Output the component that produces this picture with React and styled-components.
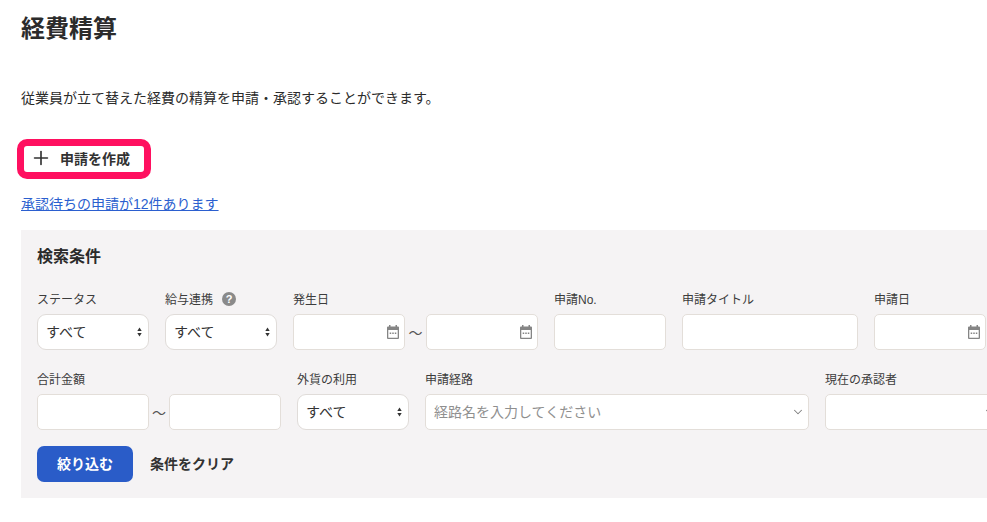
import React from 'react';
import styled, { createGlobalStyle } from 'styled-components';
import { Plus, ChevronDown } from 'lucide-react';

const GlobalStyle = createGlobalStyle`
  html, body {
    margin: 0;
    background: #fff;
    overflow: hidden;
  }
  body {
    font-family: "Liberation Sans", "Noto Sans CJK JP", sans-serif;
    color: #323232;
  }
`;

const Page = styled.div`
  width: 987px;
  height: 522px;
  padding: 13px 0 0 21px;
  box-sizing: border-box;
  overflow: hidden;
`;

const Title = styled.h1`
  margin: 0;
  font-size: 24px;
  line-height: 32px;
  font-weight: 700;
  color: #2b2b2b;
`;

const Description = styled.p`
  margin: 42px 0 0;
  font-size: 14px;
  line-height: 22px;
  color: #2b2b2b;
`;

const CreateButton = styled.button`
  display: flex;
  align-items: center;
  gap: 8px;
  width: 134px;
  height: 40px;
  margin: 30px 0 0 -4px;
  padding: 0 0 2px 6px;
  box-sizing: border-box;
  border: 7px solid #ff1060;
  border-radius: 10px;
  background: #fff;
  font: inherit;
  font-size: 14px;
  font-weight: 700;
  color: #323232;
`;

const PendingLink = styled.a`
  display: block;
  margin-top: 14px;
  font-size: 14px;
  line-height: 22px;
  color: #2b5fcf;
  text-decoration: underline;
`;

const SearchPanel = styled.section`
  width: 1100px;
  height: 268px;
  margin-top: 15px;
  padding: 16px;
  box-sizing: border-box;
  background: #f5f3f4;
`;

const PanelTitle = styled.h2`
  margin: 0;
  font-size: 16px;
  line-height: 22px;
  font-weight: 700;
  color: #2b2b2b;
`;

const FieldRow = styled.div`
  display: flex;
  margin-top: ${props => props.$top}px;
  gap: 16px;
`;

const Field = styled.div`
  display: flex;
  flex-direction: column;
  gap: 6px;
  width: ${props => props.$width}px;
  flex: none;
`;

const Label = styled.label`
  display: flex;
  align-items: center;
  gap: 9px;
  height: 16px;
  font-size: 12px;
  line-height: 16px;
  color: #3c3c3c;
`;

const HelpIcon = styled.span`
  display: inline-flex;
  align-items: center;
  justify-content: center;
  width: 14px;
  height: 14px;
  margin-top: -2px;
  border-radius: 50%;
  background: #8a8a8a;
  color: #fff;
  font-size: 11px;
  font-weight: 700;
`;

const Control = styled.div`
  position: relative;
  width: ${props => props.$width || 112}px;
  height: 36px;
  flex: none;
`;

const TextInput = styled.input`
  display: block;
  width: 100%;
  height: 100%;
  box-sizing: border-box;
  border: 1px solid #e3ded9;
  border-radius: 5px;
  background: #fff;
  outline: none;
  padding: 0 8px;
  font: inherit;
  font-size: 14px;
  &::placeholder {
    color: #8f8f8f;
    opacity: 1;
  }
`;

const Select = styled.select`
  display: block;
  width: 100%;
  height: 100%;
  box-sizing: border-box;
  appearance: none;
  border: 1px solid #e0dcd9;
  border-radius: 9px;
  background: #fff;
  padding: 0 8px;
  font: inherit;
  font-size: 14px;
  color: #323232;
`;

const ControlIcon = styled.span`
  position: absolute;
  top: 0;
  bottom: 0;
  right: ${props => props.$right}px;
  display: flex;
  align-items: center;
  color: #808080;
  pointer-events: none;
`;

const RangeGroup = styled.div`
  display: flex;
  align-items: center;
`;

const Tilde = styled.span`
  width: ${props => props.$width}px;
  text-align: center;
  font-size: 14px;
  color: #555;
`;

const Actions = styled.div`
  display: flex;
  align-items: center;
  gap: 17px;
  margin-top: 16px;
`;

const SubmitButton = styled.button`
  width: 96px;
  height: 36px;
  padding: 0 0 2px;
  border: none;
  border-radius: 7px;
  background: #2a5cc8;
  color: #fff;
  font: inherit;
  font-size: 14px;
  font-weight: 700;
`;

const ClearButton = styled.button`
  padding: 0 0 2px;
  border: none;
  background: none;
  font: inherit;
  font-size: 14px;
  font-weight: 700;
  color: #323232;
`;

const SelectArrows = () => (
  <svg width="5" height="10" viewBox="0 0 5 10" fill="#333">
    <path d="M2.5 0.5 4.7 4H0.3z" />
    <path d="M2.5 9.5 0.3 6h4.4z" />
  </svg>
);

const CalendarIcon = () => (
  <svg width="12" height="14" viewBox="0 0 12 14" fill="#858585">
    <path d="M2 0h1.5v1.5h5V0H10v1.5h1a1 1 0 0 1 1 1V13a1 1 0 0 1-1 1H1a1 1 0 0 1-1-1V2.500a1 1 0 0 1 1-1h1zM1.300 5v7.700h9.400V5z" />
    <path d="M2.700 7.500h1.500V9H2.700zM5.250 7.500h1.500V9h-1.500zM7.800 7.500h1.500V9H7.800z" />
  </svg>
);

const SelectControl = ({ width }) => (
  <Control $width={width}>
    <Select defaultValue="all">
      <option value="all">すべて</option>
    </Select>
    <ControlIcon $right={7}>
      <SelectArrows />
    </ControlIcon>
  </Control>
);

const DateControl = () => (
  <Control>
    <TextInput />
    <ControlIcon $right={6}>
      <CalendarIcon />
    </ControlIcon>
  </Control>
);

const ComboControl = ({ width, placeholder }) => (
  <Control $width={width}>
    <TextInput placeholder={placeholder} />
    <ControlIcon $right={4}>
      <ChevronDown size={14} strokeWidth={1.8} />
    </ControlIcon>
  </Control>
);

const App = () => {
  return (
    <>
      <GlobalStyle />
      <Page>
        <Title>経費精算</Title>
        <Description>従業員が立て替えた経費の精算を申請・承認することができます。</Description>
        <CreateButton>
          <Plus size={22} strokeWidth={1.8} />
          申請を作成
        </CreateButton>
        <PendingLink href="#">承認待ちの申請が12件あります</PendingLink>
        <SearchPanel>
          <PanelTitle>検索条件</PanelTitle>
          <FieldRow $top={24}>
            <Field $width={112}>
              <Label>ステータス</Label>
              <SelectControl />
            </Field>
            <Field $width={112}>
              <Label>
                給与連携
                <HelpIcon>?</HelpIcon>
              </Label>
              <SelectControl />
            </Field>
            <Field $width={245}>
              <Label>発生日</Label>
              <RangeGroup>
                <DateControl />
                <Tilde $width={21}>～</Tilde>
                <DateControl />
              </RangeGroup>
            </Field>
            <Field $width={112}>
              <Label>申請No.</Label>
              <Control>
                <TextInput />
              </Control>
            </Field>
            <Field $width={176}>
              <Label>申請タイトル</Label>
              <Control $width={176}>
                <TextInput />
              </Control>
            </Field>
            <Field $width={112}>
              <Label>申請日</Label>
              <DateControl />
            </Field>
          </FieldRow>
          <FieldRow $top={22}>
            <Field $width={244}>
              <Label>合計金額</Label>
              <RangeGroup>
                <Control>
                  <TextInput />
                </Control>
                <Tilde $width={20}>～</Tilde>
                <Control>
                  <TextInput />
                </Control>
              </RangeGroup>
            </Field>
            <Field $width={112}>
              <Label>外貨の利用</Label>
              <SelectControl />
            </Field>
            <Field $width={384}>
              <Label>申請経路</Label>
              <ComboControl width={384} placeholder="経路名を入力してください" />
            </Field>
            <Field $width={176}>
              <Label>現在の承認者</Label>
              <ComboControl width={176} />
            </Field>
          </FieldRow>
          <Actions>
            <SubmitButton>絞り込む</SubmitButton>
            <ClearButton>条件をクリア</ClearButton>
          </Actions>
        </SearchPanel>
      </Page>
    </>
  );
};

export default App;
